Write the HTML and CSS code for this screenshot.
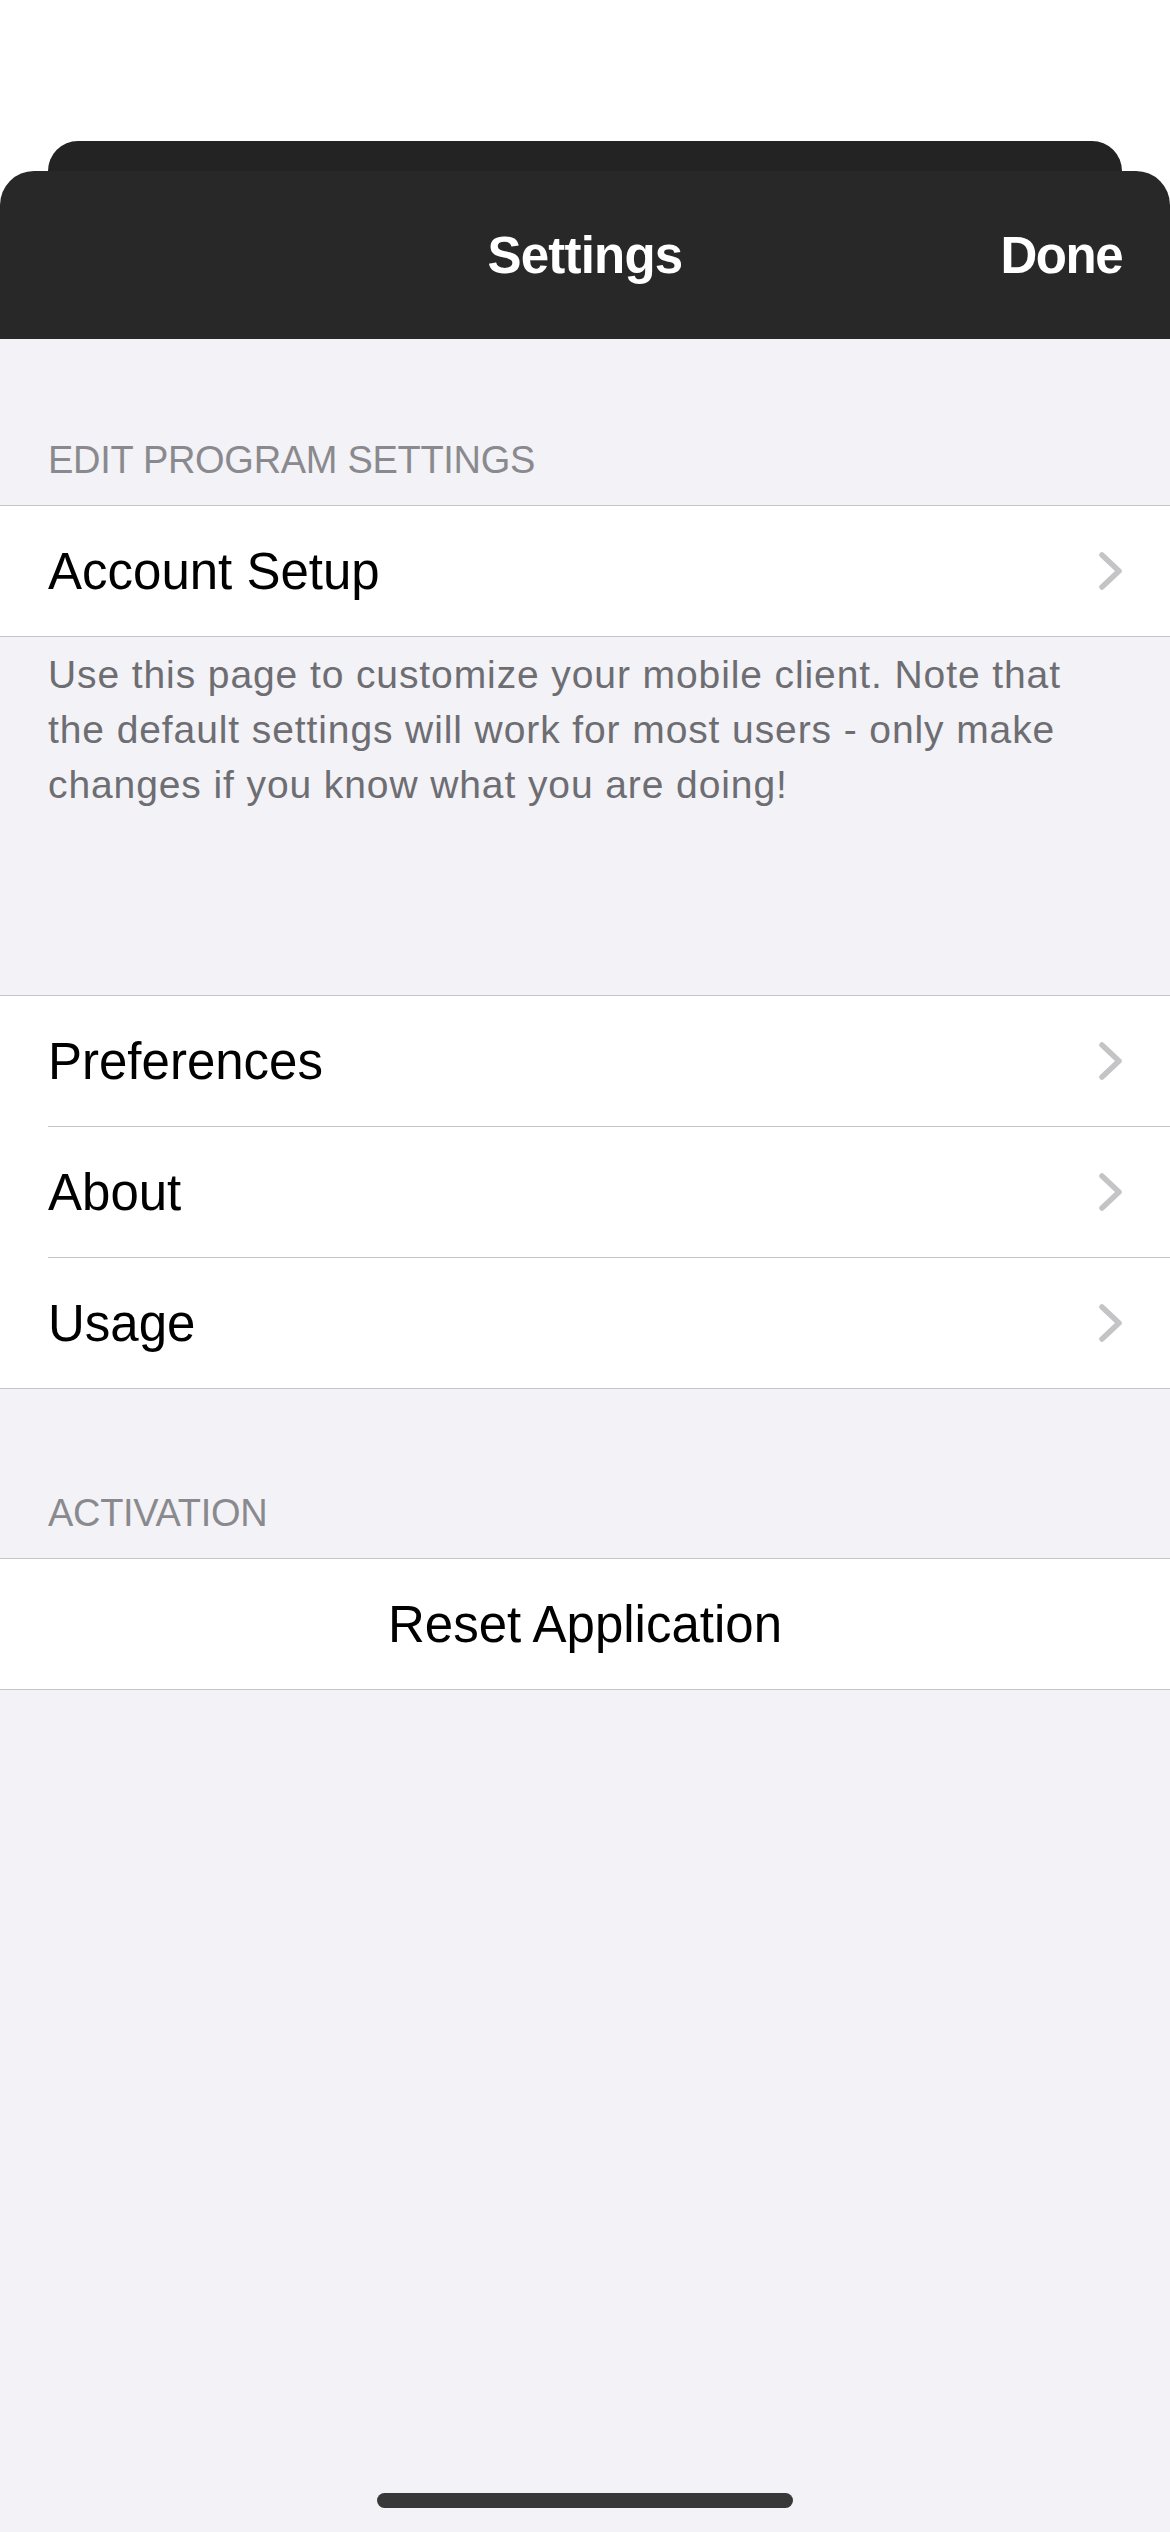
FILE: index.html
```html
<!DOCTYPE html>
<html lang="en">
<head>
  <meta charset="UTF-8" />
  <meta name="viewport" content="width=device-width, initial-scale=1.0"/>
  <title>Settings</title>
  <link rel="stylesheet" href="styles.css">
</head>
<body>
  <!-- Sheet stack: the card behind peeks out above the settings sheet -->
  <div class="sheet-top">
    <div class="back-card"></div>
    <div class="nav-bar">
      <div></div>
      <div class="nav-title">Settings</div>
      <div class="nav-done">Done</div>
    </div>
  </div>

  <div class="section-header">EDIT PROGRAM SETTINGS</div>
  <div class="group">
    <div class="cell">
      <div class="cell-body">
        <span class="cell-label">Account Setup</span>
        <svg class="chevron" width="24" height="38" viewBox="0 0 24 38"><polyline points="3,3 20,19 3,35" /></svg>
      </div>
    </div>
  </div>
  <div class="section-footer">Use this page to customize your mobile client. Note that the default settings will work for most users - only make changes if you know what you are doing!</div>

  <div class="group">
    <div class="cell">
      <div class="cell-body">
        <span class="cell-label">Preferences</span>
        <svg class="chevron" width="24" height="38" viewBox="0 0 24 38"><polyline points="3,3 20,19 3,35" /></svg>
      </div>
    </div>
    <div class="cell">
      <div class="cell-body">
        <span class="cell-label">About</span>
        <svg class="chevron" width="24" height="38" viewBox="0 0 24 38"><polyline points="3,3 20,19 3,35" /></svg>
      </div>
    </div>
    <div class="cell">
      <div class="cell-body">
        <span class="cell-label">Usage</span>
        <svg class="chevron" width="24" height="38" viewBox="0 0 24 38"><polyline points="3,3 20,19 3,35" /></svg>
      </div>
    </div>
  </div>

  <div class="section-header">ACTIVATION</div>
  <div class="group">
    <div class="cell cell-button">
      <div class="cell-body">
        <span class="cell-label">Reset Application</span>
      </div>
    </div>
  </div>

  <div class="home-indicator"></div>
</body>
</html>
```

FILE: styles.css
```css
body {
  margin: 0;
  min-height: 2532px;
  font-family: "Liberation Sans", Arial, sans-serif;
  background-color: #f2f2f7;
  color: #000;
}

/* Top of the modal sheet */
.sheet-top {
  background-color: #fff;
  padding-top: 141px;
}

.back-card {
  height: 30px;
  margin: 0 48px;
  background-color: #232323;
  border-radius: 30px 30px 0 0;
}

.nav-bar {
  display: grid;
  grid-template-columns: 1fr auto 1fr;
  align-items: start;
  height: 168px;
  box-sizing: border-box;
  padding: 56px 48px 0;
  background-color: #282828;
  border-radius: 34px 34px 0 0;
  color: #fff;
  font-size: 51px;
  line-height: 57px;
  font-weight: bold;
}

.nav-title {
  letter-spacing: -0.8px;
}

.nav-done {
  justify-self: end;
  letter-spacing: -1.5px;
}

/* Grouped table sections */
.section-header {
  padding: 98px 48px 22px;
  font-size: 38px;
  line-height: 46px;
  letter-spacing: -0.3px;
  color: #8a8a8e;
}

.group + .section-header {
  padding-top: 101px;
}

.section-footer {
  height: 165px;
  padding: 10px 48px 183px;
  font-size: 39px;
  line-height: 55px;
  letter-spacing: 0.9px;
  color: #6d6d72;
}

.group {
  background-color: #fff;
  border-top: 1px solid #c6c6c8;
  border-bottom: 1px solid #c6c6c8;
}

.cell {
  padding-left: 48px;
}

.cell-body {
  display: flex;
  align-items: center;
  height: 130px;
  padding-right: 47px;
  border-bottom: 1px solid #c6c6c8;
}

.cell:last-child .cell-body {
  border-bottom: none;
}

.cell-label {
  flex: 1;
  font-size: 51px;
  line-height: 57px;
}

.cell-button {
  padding-left: 0;
}

.cell-button .cell-body {
  padding-right: 0;
  text-align: center;
}

.chevron polyline {
  fill: none;
  stroke: #c4c4c7;
  stroke-width: 5.5;
  stroke-linecap: round;
  stroke-linejoin: round;
}

.home-indicator {
  position: fixed;
  left: 377px;
  bottom: 24px;
  width: 416px;
  height: 15px;
  border-radius: 8px;
  background-color: #383838;
}
```
